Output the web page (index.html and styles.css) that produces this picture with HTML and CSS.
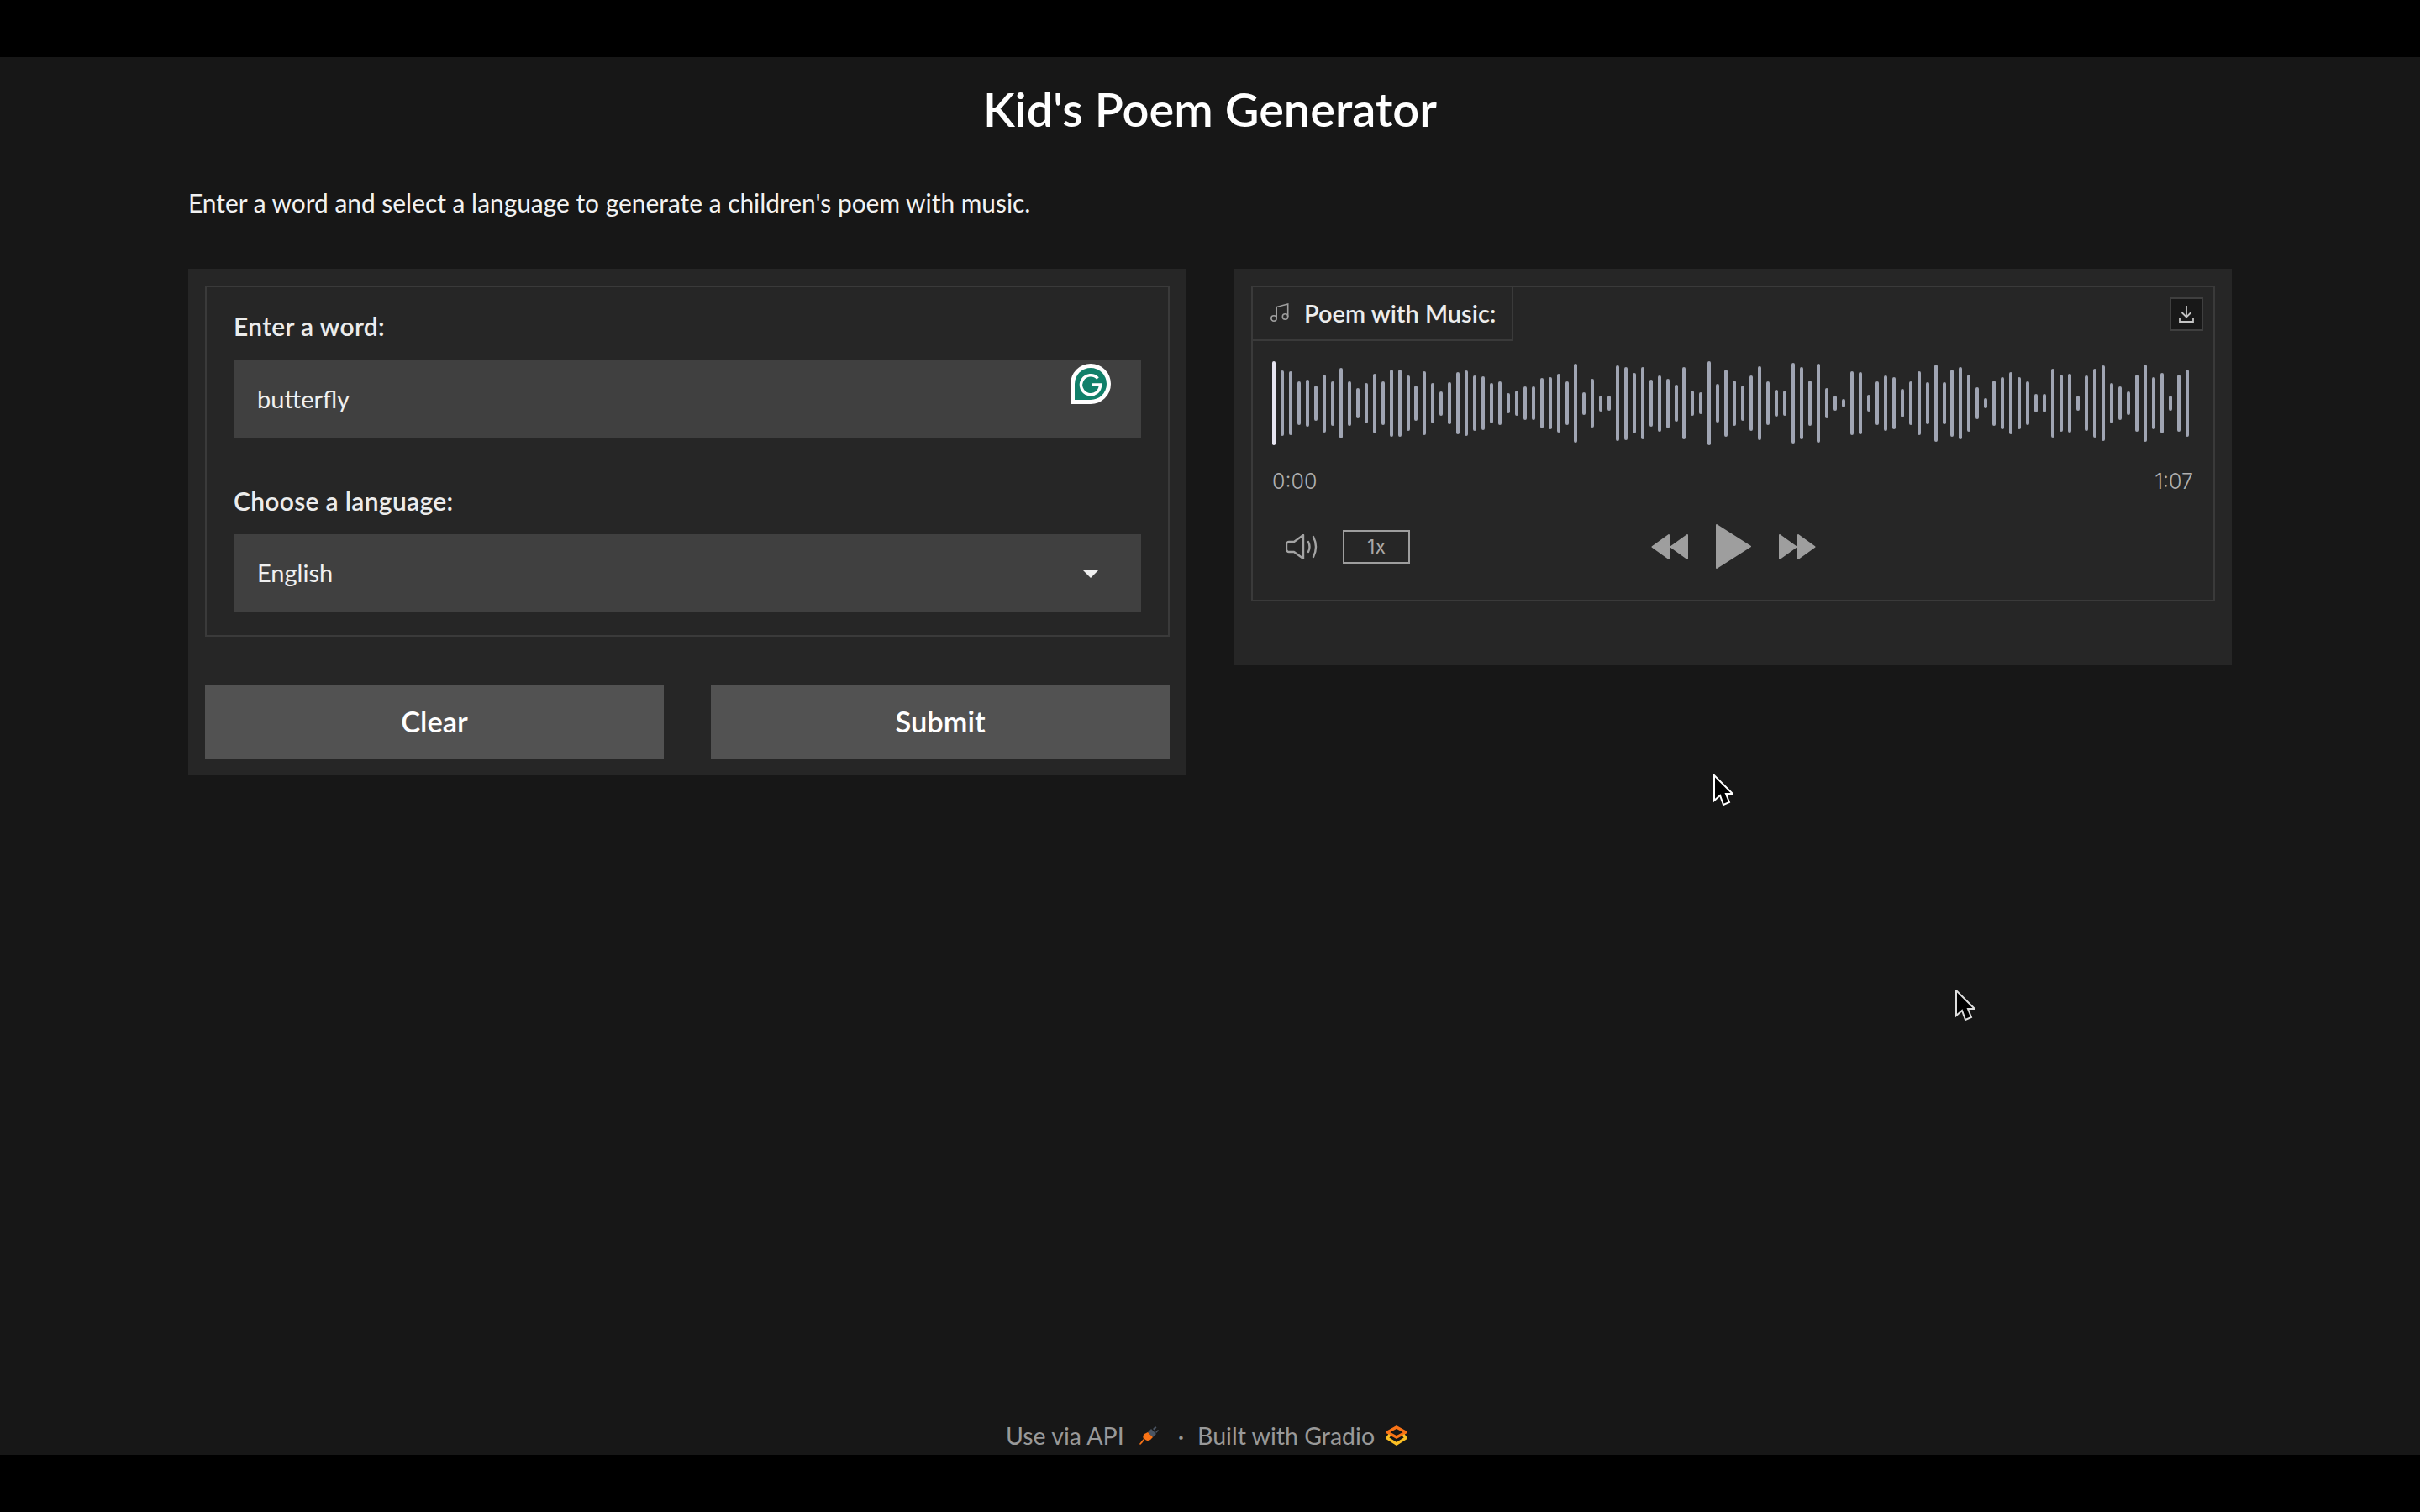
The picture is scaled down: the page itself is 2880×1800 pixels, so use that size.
FILE: index.html
```html
<!DOCTYPE html>
<html lang="en">
<head>
  <meta charset="UTF-8">
  <title>Kid's Poem Generator</title>
  <link rel="stylesheet" href="styles.css">
</head>
<body>
  <div class="app">
    <h1 class="title">Kid's Poem Generator</h1>
    <p class="intro">Enter a word and select a language to generate a children's poem with music.</p>

    <div class="columns">
      <div class="panel">
        <div class="form-box">
          <label class="field-label" for="word">Enter a word:</label>
          <div class="field">
            <input class="text-input" id="word" type="text" value="butterfly">
            <svg class="grammarly" width="48" height="48" viewBox="0 0 48 48">
              <path d="M24 0a24 24 0 0 1 0 48H0V24A24 24 0 0 1 24 0z" fill="#fff"/>
              <path d="M24 5a19 19 0 0 1 0 38H5V24A19 19 0 0 1 24 5z" fill="#11806a"/>
              <path d="M32.5 17.5a11.5 11.5 0 1 0 3 7.5H25" fill="none" stroke="#fff" stroke-width="3.5"/>
            </svg>
          </div>

          <label class="field-label second" for="language">Choose a language:</label>
          <div class="field">
            <input class="text-input select-input" id="language" type="text" value="English">
            <span class="arrow"></span>
          </div>
        </div>

        <div class="buttons">
          <button>Clear</button>
          <button>Submit</button>
        </div>
      </div>

      <div class="panel audio-panel">
        <div class="audio-box">
          <div class="audio-head">
            <div class="tab">
              <svg width="23" height="22" viewBox="0 0 23 22" fill="none" stroke="#9e9e9e" stroke-width="1.6">
                <circle cx="4" cy="18" r="3.2"/>
                <circle cx="17.5" cy="16" r="3.2"/>
                <path d="M7.2 18V4.5L20.7 1v15"/>
              </svg>
              <span>Poem with Music:</span>
            </div>
            <div class="download">
              <svg width="18" height="20" viewBox="0 0 18 20" fill="none" stroke="#c4c4c4" stroke-width="1.8">
                <path d="M9 0v13M3.500 8L9 13.500 14.500 8M1 14v5h16v-5"/>
              </svg>
            </div>
          </div>

          <div class="wave" id="wave"></div>

          <div class="times">
            <span>0:00</span>
            <span>1:07</span>
          </div>

          <div class="controls">
            <div class="controls-left">
              <svg width="40" height="30" viewBox="0 0 40 30" fill="none" stroke="#a4a4a4" stroke-width="2.4" stroke-linejoin="round" stroke-linecap="round">
                <path d="M4 9h6l11-8v28l-11-8H4a3 3 0 0 1-3-3v-6a3 3 0 0 1 3-3z"/>
                <path d="M27 9c2 4 2 8 0 12M33 3c4 8 4 16 0 24"/>
              </svg>
              <div class="speed">1x</div>
            </div>
            <div class="transport">
              <svg width="44" height="30" viewBox="0 0 44 30" fill="#9e9e9e" stroke="#9e9e9e" stroke-width="2" stroke-linejoin="round">
                <path d="M1.500 15L21 1v28zM23.500 15L43 1v28z"/>
              </svg>
              <svg width="42" height="53" viewBox="0 0 42 53" fill="#9e9e9e" stroke="#9e9e9e" stroke-width="2" stroke-linejoin="round">
                <path d="M1 1l40 25.500L1 52z"/>
              </svg>
              <svg width="44" height="30" viewBox="0 0 44 30" fill="#9e9e9e" stroke="#9e9e9e" stroke-width="2" stroke-linejoin="round">
                <path d="M42.500 15L23 1v28zM20.500 15L1 1v28z"/>
              </svg>
            </div>
          </div>
        </div>
      </div>
    </div>

    <div class="footer">
      <span>Use via API</span>
      <svg class="plug" width="24" height="24" viewBox="0 0 24 24">
        <path d="M14 4l6 6-4 4-6-6z" fill="#4b5563"/>
        <path d="M19 1l1.500 1.500-3 3L16 4zM22 5l1 1-3 3-1-1z" fill="#4b5563"/>
        <path d="M10 8l6 6-3 3a5 5 0 0 1-7-1L4 20l-3 3-1-1 3-4 2-2a5 5 0 0 1 1-6z" fill="#f97316"/>
      </svg>
      <span class="dot">·</span>
      <span>Built with Gradio</span>
      <svg class="logo" width="26" height="24" viewBox="0 0 26 24" fill="none" stroke-width="3.4">
        <path d="M13 2l11 6-11 6L2 8z" stroke="#f97316"/>
        <path d="M5 11l-3 4 11 7 11-7-3-4" stroke="#fbbf24"/>
      </svg>
    </div>
  </div>

  <svg class="cursor cursor-one" width="24" height="37" viewBox="-1 -1 24 37">
    <path d="M0 0v30l7-6 4 11 7-3-4-10h8z" fill="#000" stroke="#fff" stroke-width="2"/>
  </svg>
  <svg class="cursor cursor-two" width="24" height="37" viewBox="-1 -1 24 37">
    <path d="M0 0v30l7-6 4 11 7-3-4-10h8z" fill="#000" stroke="#ddd" stroke-width="2"/>
  </svg>

  <script>
    // Bar heights read off the waveform, in px
    const heights = [
      100, 78, 76, 52, 56, 42, 69, 53, 84, 53, 36, 48, 71, 52, 80, 80, 66, 42, 76, 48, 29, 50,
      74, 78, 66, 64, 48, 52, 24, 30, 40, 40, 60, 62, 70, 52, 94, 27, 58, 19, 18, 90, 87, 72,
      86, 56, 67, 59, 44, 86, 30, 26, 100, 46, 80, 54, 42, 66, 88, 52, 32, 30, 96, 86, 54, 94,
      36, 18, 10, 76, 74, 20, 52, 66, 62, 34, 52, 76, 50, 92, 50, 80, 86, 68, 38, 12, 54, 62,
      74, 62, 52, 22, 22, 82, 68, 70, 18, 66, 82, 90, 48, 40, 28, 68, 92, 62, 72, 18, 68, 80
    ];
    const wave = document.getElementById("wave");
    heights.forEach(function (h, i) {
      const bar = document.createElement("div");
      bar.className = i === 0 ? "bar played" : "bar";
      bar.style.height = h + "px";
      wave.appendChild(bar);
    });
  </script>
</body>
</html>
```
FILE: styles.css
```css
* {
  box-sizing: border-box;
}

body {
  margin: 0;
  background: #000;
  padding: 68px 0;
  font-family: 'Lato', sans-serif;
  color: #fff;
}

.app {
  position: relative;
  height: 1664px;
  background: #171717;
  padding: 0 224px;
  display: flex;
  flex-direction: column;
}

.title {
  margin: 0;
  padding-top: 28px;
  text-align: center;
  font-size: 56px;
  line-height: 68px;
  font-weight: 600;
}

.intro {
  margin: 59px 0 0;
  font-size: 29.900px;
  line-height: 36px;
  color: #f2f2f2;
}

.columns {
  margin-top: 61px;
  display: flex;
  align-items: flex-start;
  gap: 56px;
}

.panel {
  flex: 1;
  background: #262626;
  padding: 20px;
}

.form-box {
  border: 2px solid #3a3a3a;
  padding: 28px 32px;
  height: 418px;
}

.field-label {
  display: block;
  font-size: 30px;
  line-height: 36px;
  font-weight: 600;
  letter-spacing: 0.3px;
  color: #ececec;
}

.field-label.second {
  margin-top: 56px;
}

.field {
  position: relative;
  margin-top: 22px;
}

.text-input {
  display: block;
  width: 100%;
  height: 94px;
  border: none;
  background: #404040;
  padding: 0 28px 2px;
  font-family: inherit;
  font-size: 29px;
  color: #f0f0f0;
}

.text-input.select-input {
  height: 92px;
}

.grammarly {
  position: absolute;
  right: 36px;
  top: 5px;
}

.arrow {
  position: absolute;
  right: 51px;
  top: 43px;
  border-left: 9px solid transparent;
  border-right: 9px solid transparent;
  border-top: 9px solid #f0f0f0;
}

.buttons {
  margin-top: 57px;
  display: flex;
  gap: 56px;
}

.buttons button {
  flex: 1;
  height: 88px;
  border: none;
  background: #525252;
  padding-bottom: 3px;
  font-family: inherit;
  font-size: 34.500px;
  font-weight: 600;
  color: #fff;
}

.audio-panel {
  padding-bottom: 76px;
}

.audio-box {
  border: 2px solid #3a3a3a;
  margin-left: 1px;
  padding-bottom: 37px;
}

.audio-head {
  display: flex;
  justify-content: space-between;
  align-items: flex-start;
}

.tab {
  width: 310px;
  height: 64px;
  border-right: 2px solid #3a3a3a;
  border-bottom: 2px solid #3a3a3a;
  display: flex;
  align-items: center;
  gap: 17px;
  padding: 0 0 2px 21px;
  font-size: 29px;
  font-weight: 600;
  color: #ececec;
}

.download {
  width: 40px;
  height: 40px;
  margin: 12px 12px 0 0;
  background: #181818;
  border: 2px solid #3f3f3f;
  display: flex;
  align-items: center;
  justify-content: center;
}

.wave {
  margin: 24px 0 0 23px;
  width: 1092px;
  height: 100px;
  display: flex;
  justify-content: space-between;
  align-items: center;
}

.bar {
  width: 4px;
  border-radius: 2px;
  background: #a0a5b3;
}

.bar.played {
  background: #e6e4f0;
}

.times {
  margin: 26px 24px 0 23px;
  display: flex;
  justify-content: space-between;
  font-family: 'Inter', sans-serif;
  font-weight: 300;
  font-size: 25px;
  line-height: 34px;
  color: #b0b0b0;
}

.controls {
  margin-top: 34px;
  height: 53px;
  display: grid;
  grid-template-columns: 1fr auto 1fr;
  align-items: center;
}

.controls-left {
  padding-left: 39px;
  display: flex;
  align-items: center;
  gap: 28px;
}

.speed {
  width: 80px;
  height: 40px;
  border: 2px solid #9e9e9e;
  display: flex;
  align-items: center;
  justify-content: center;
  font-family: 'Inter', sans-serif;
  font-size: 23px;
  color: #a8a8a8;
}

.transport {
  display: flex;
  align-items: center;
  gap: 33px;
}

.footer {
  margin-top: auto;
  height: 46px;
  padding-right: 8px;
  display: flex;
  justify-content: center;
  align-items: center;
  font-size: 28.500px;
  color: #999;
}

.plug {
  margin-left: 18px;
}

.dot {
  margin: 0 16px 0 22px;
}

.logo {
  margin-left: 13px;
}

.cursor {
  position: absolute;
}

.cursor-one {
  left: 2039px;
  top: 922px;
}

.cursor-two {
  left: 2327px;
  top: 1178px;
}
```
